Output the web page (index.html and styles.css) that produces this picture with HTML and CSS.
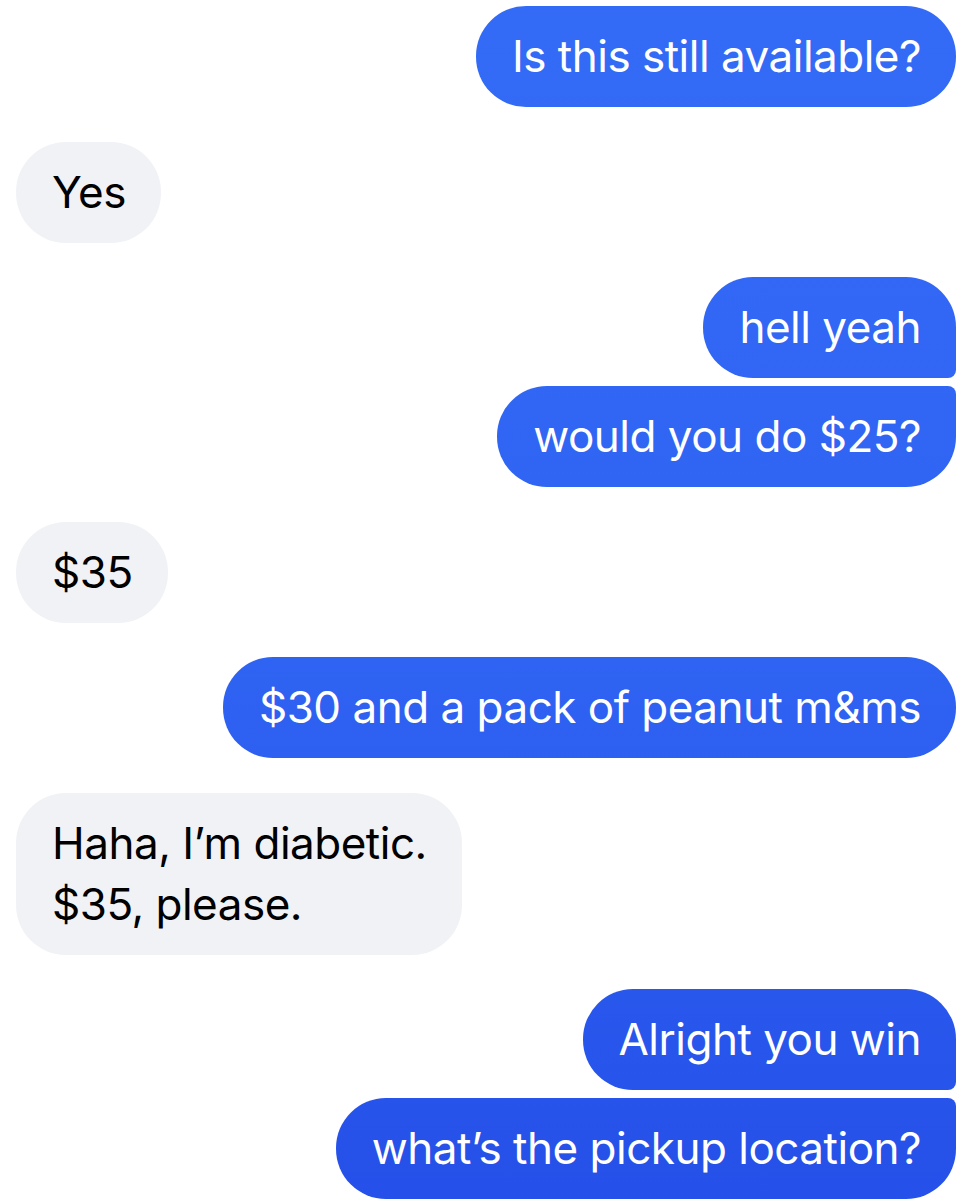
FILE: index.html
```html
<!DOCTYPE html>
<html lang="en">
<head>
    <meta charset="UTF-8">
    <meta name="viewport" content="width=device-width, initial-scale=1.0">
    <title>Chat</title>
    <link rel="stylesheet" href="styles.css">
</head>
<body>
    <div class="chat">
        <div class="group sent">
            <div class="bubble">Is this still available?</div>
        </div>
        <div class="group received">
            <div class="bubble">Yes</div>
        </div>
        <div class="group sent">
            <div class="bubble first">hell yeah</div>
            <div class="bubble last">would you do $25?</div>
        </div>
        <div class="group received">
            <div class="bubble">$35</div>
        </div>
        <div class="group sent">
            <div class="bubble">$30 and a pack of peanut m&amp;ms</div>
        </div>
        <div class="group received">
            <div class="bubble">Haha, I’m diabetic.<br>$35, please.</div>
        </div>
        <div class="group sent">
            <div class="bubble first">Alright you win</div>
            <div class="bubble last">what’s the pickup location?</div>
        </div>
    </div>
</body>
</html>
```

FILE: styles.css
```css
body {
    margin: 0;
    background-color: #fff;
    font-family: Inter, "Noto Sans", sans-serif;
}
.chat {
    display: flex;
    flex-direction: column;
    gap: 34.5px;
    padding: 6px 23px 0 16px;
}
.group {
    display: flex;
    flex-direction: column;
    gap: 8px;
}
.group.sent {
    align-items: flex-end;
}
.group.received {
    align-items: flex-start;
}
.bubble {
    padding: 20px 35px 20px 36px;
    font-size: 44px;
    line-height: 61px;
    letter-spacing: -0.5px;
    border-radius: 50px;
    white-space: nowrap;
}
.sent .bubble {
    color: #fff;
    background: linear-gradient(180deg, #336bf6 0%, #2f63f2 55%, #2550e9 100%);
    background-attachment: fixed;
}
.received .bubble {
    color: #000;
    background-color: #f1f2f6;
}
.sent .bubble.first {
    border-bottom-right-radius: 8px;
}
.sent .bubble.last {
    border-top-right-radius: 8px;
}
```
